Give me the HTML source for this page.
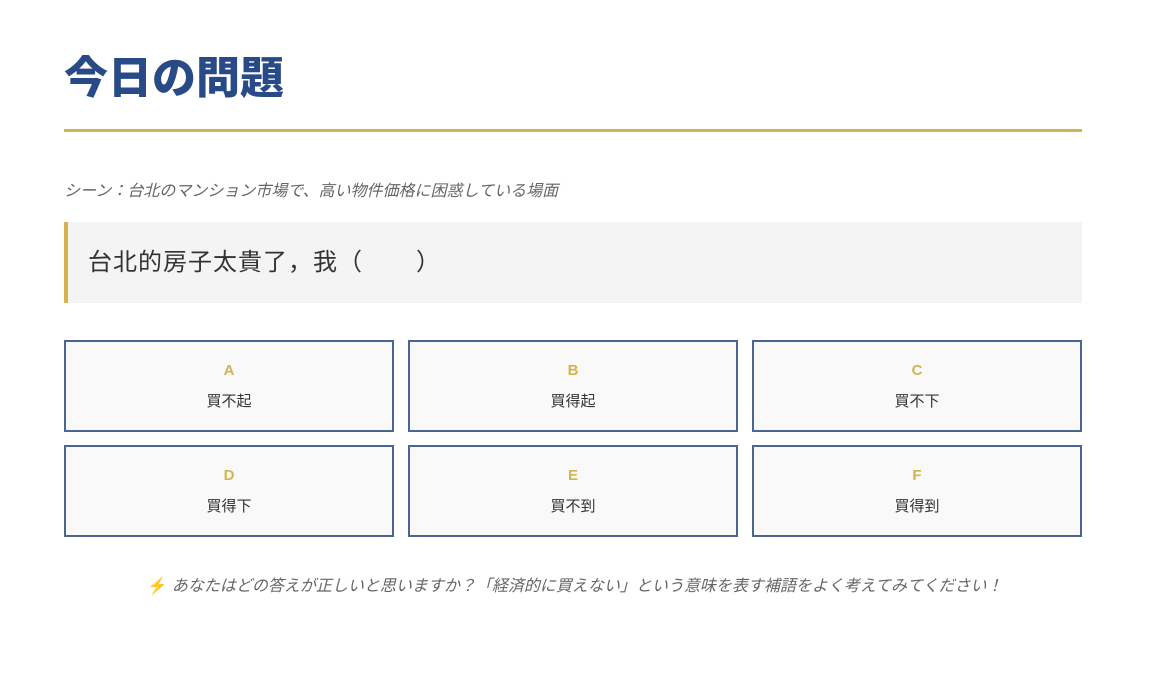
<!DOCTYPE html>
<html><head><meta charset="utf-8">
<style>
*{margin:0;padding:0;box-sizing:border-box}
body{width:1150px;height:676px;background:#fff;font-family:"Liberation Sans","Noto Sans CJK JP",sans-serif;position:relative;overflow:hidden}
h1{position:absolute;left:64px;top:52px;font-size:44px;font-weight:900;color:#284a86;line-height:54px}
.line{position:absolute;left:64px;top:129px;width:1018px;height:3px;background:#d2b552}
.scene{position:absolute;left:64px;top:181px;font-size:16px;font-style:italic;color:#666;line-height:22px}
.q{position:absolute;left:64px;top:222px;width:1018px;height:81px;background:#f4f4f4;border-left:4px solid #d2b552;font-size:24px;color:#333;padding-left:20px;line-height:81px;letter-spacing:1px}
.card{position:absolute;width:330px;height:92px;border:2px solid #4a6591;background:#f9f9f9;text-align:center}
.card .l{position:absolute;left:0;right:0;top:20px;font-size:15px;font-weight:bold;color:#d2b552;line-height:18px}
.card .t{position:absolute;left:0;right:0;top:51px;font-size:15px;color:#333;line-height:18px}
.foot{position:absolute;left:0;width:1150px;top:576px;text-align:center;font-size:16px;font-style:italic;color:#666;line-height:22px}
</style></head><body>
<h1>今日の問題</h1>
<div class="line"></div>
<div class="scene">シーン：台北のマンション市場で、高い物件価格に困惑している場面</div>
<div class="q">台北的房子太貴了，我（<span style="display:inline-block;width:53px"></span>）</div>
<div class="card" style="left:64px;top:340px"><div class="l">A</div><div class="t">買不起</div></div>
<div class="card" style="left:408px;top:340px"><div class="l">B</div><div class="t">買得起</div></div>
<div class="card" style="left:752px;top:340px"><div class="l">C</div><div class="t">買不下</div></div>
<div class="card" style="left:64px;top:445px"><div class="l">D</div><div class="t">買得下</div></div>
<div class="card" style="left:408px;top:445px"><div class="l">E</div><div class="t">買不到</div></div>
<div class="card" style="left:752px;top:445px"><div class="l">F</div><div class="t">買得到</div></div>
<div class="foot"><span style="color:#f0b400;font-style:normal">⚡</span> あなたはどの答えが正しいと思いますか？「経済的に買えない」という意味を表す補語をよく考えてみてください！</div>
</body></html>
